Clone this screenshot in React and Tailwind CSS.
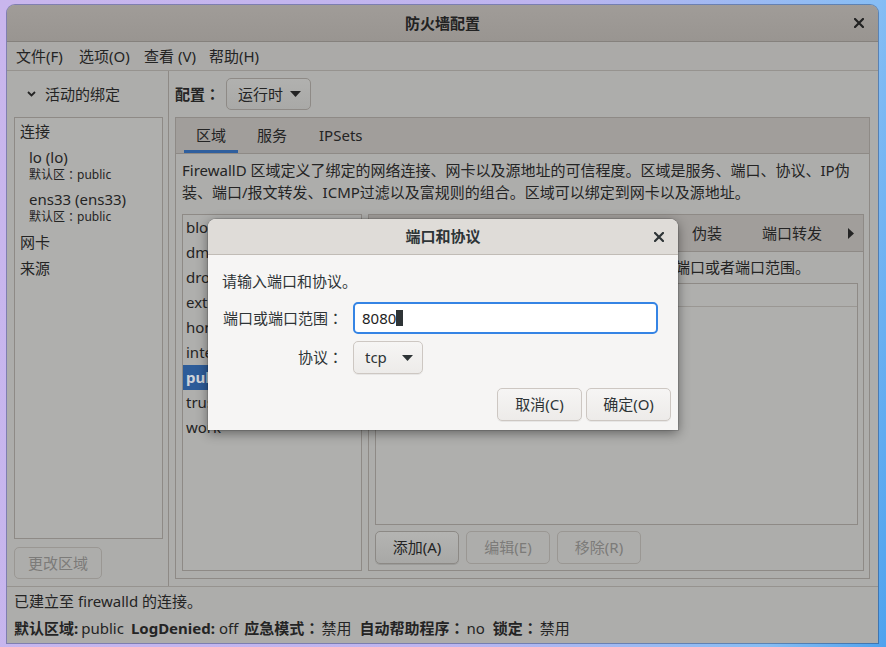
import React from "react";

function Caret({ className = "" }) {
  return (
    <svg width="11" height="6" viewBox="0 0 11 6" className={className}>
      <path d="M0 0H11L5.5 6Z" fill="currentColor" />
    </svg>
  );
}

function CloseX({ className = "" }) {
  return (
    <svg width="10" height="10" viewBox="0 0 10 10" className={className}>
      <path d="M1 1L9 9M9 1L1 9" stroke="currentColor" strokeWidth="2.2" strokeLinecap="square" />
    </svg>
  );
}

function Chevron() {
  return (
    <svg width="9" height="6" viewBox="0 0 9 6">
      <path d="M1 1L4.5 4.5L8 1" stroke="currentColor" strokeWidth="1.8" fill="none" />
    </svg>
  );
}

function C() {
  return <span className="font-['Noto_Sans_CJK_JP',sans-serif]">：</span>;
}

const zones = ["block", "dmz", "drop", "external", "home", "internal", "public", "trusted", "work"];

export default function App() {
  return (
    <div className="relative w-[886px] h-[647px] overflow-hidden bg-[linear-gradient(100deg,#c9b6ed_0%,#bdb4ef_55%,#86bdf4_88%,#4ea2ee_100%)] pt-[5px] pl-[7px] font-['Noto_Sans','Noto_Sans_CJK_SC',sans-serif] text-[15px] text-[#242424]">
      {/* Main window */}
      <div className="w-[871px] h-[638px] flex flex-col rounded-t-[8px] overflow-hidden bg-[#adadab] shadow-[0_0_0_1px_rgba(40,60,100,0.45)]">
        {/* Title bar */}
        <div className="h-[37px] shrink-0 grid grid-cols-[1fr_auto_1fr] items-center bg-[linear-gradient(to_bottom,#a09c98,#999591)] border-b border-[#85817d]">
          <div />
          <div className="font-bold text-[#222]">防火墙配置</div>
          <div className="flex justify-end pr-[14px] text-[#222]">
            <CloseX />
          </div>
        </div>
        {/* Menu bar */}
        <div className="h-[29px] shrink-0 flex items-center pl-[9px] bg-[#abaaa8] border-b border-[#96938f]">
          <span className="w-[63px]">文件(F)</span>
          <span className="w-[65px]">选项(O)</span>
          <span className="w-[65px]">查看 (V)</span>
          <span>帮助(H)</span>
        </div>
        {/* Main area */}
        <div className="h-[515px] shrink-0 flex">
          {/* Left pane */}
          <div className="w-[162px] shrink-0 border-r border-[#8e8a86] flex flex-col pl-[7px]">
            <div className="h-[46px] flex items-center pl-[13px] gap-[9px]">
              <Chevron />
              <span>活动的绑定</span>
            </div>
            <div className="w-[149px] h-[422px] border border-[#8e8a86] bg-[#afafad] flex flex-col">
              <div className="h-[26px] flex items-center pl-[5px]">连接</div>
              <div className="h-[3px]" />
              <div className="h-[20px] flex items-center pl-[14px]">lo (lo)</div>
              <div className="h-[16px] flex items-center pl-[14px] text-[12px]">
                默认区<C />public
              </div>
              <div className="h-[6px]" />
              <div className="h-[20px] flex items-center pl-[14px]">ens33 (ens33)</div>
              <div className="h-[15px] flex items-center pl-[14px] text-[12px]">
                默认区<C />public
              </div>
              <div className="h-[5px]" />
              <div className="h-[26px] flex items-center pl-[5px]">网卡</div>
              <div className="h-[26px] flex items-center pl-[5px]">来源</div>
            </div>
            <div className="mt-[8px] w-[88px] h-[32px] rounded-[5px] border border-[#9a9793] flex items-center justify-center text-[#7c7b79]">
              更改区域
            </div>
          </div>
          {/* Right pane */}
          <div className="flex-1 flex flex-col pl-[6px] pr-[8px]">
            <div className="h-[46px] flex items-center">
              <span className="w-[51px] font-bold">
                配置<C />
              </span>
              <div className="w-[85px] h-[32px] rounded-[5px] border border-[#8e8a86] bg-[linear-gradient(to_bottom,#b1b1af,#a9a9a7)] flex items-center pl-[11px] gap-[7px]">
                <span>运行时</span>
                <Caret className="text-[#242424]" />
              </div>
            </div>
            {/* Notebook */}
            <div className="h-[462px] border border-[#8e8a86] flex flex-col">
              <div className="h-[36px] shrink-0 flex items-stretch pl-[8px] gap-[6px] bg-[#a19e9b] border-b border-[#8e8a86]">
                <div className="relative px-[12px] flex items-center">
                  区域
                  <div className="absolute left-0 right-0 bottom-0 h-[3px] bg-[#2f5f9e]" />
                </div>
                <div className="px-[13px] flex items-center">服务</div>
                <div className="px-[13px] flex items-center">IPSets</div>
              </div>
              <div className="pt-[5px] pl-[6px] leading-[22px] whitespace-nowrap">
                FirewallD 区域定义了绑定的网络连接、网卡以及源地址的可信程度。区域是服务、端口、协议、IP伪
                <br />
                装、端口/报文转发、ICMP过滤以及富规则的组合。区域可以绑定到网卡以及源地址。
              </div>
              <div className="mt-[11px] h-[357px] flex pl-[6px] pr-[5px] gap-[6px]">
                {/* Zone list */}
                <div className="w-[180px] shrink-0 border border-[#8e8a86] bg-[#afafad] flex flex-col">
                  {zones.map((z) => (
                    <div
                      key={z}
                      className={
                        z === "public"
                          ? "h-[25px] flex items-center pl-[3px] bg-[#2d5c99] text-[#cfd3d9] font-bold"
                          : "h-[25px] flex items-center pl-[3px]"
                      }
                    >
                      {z}
                    </div>
                  ))}
                </div>
                {/* Zone pane */}
                <div className="flex-1 border border-[#8e8a86] flex flex-col">
                  <div className="h-[37px] shrink-0 flex items-stretch bg-[#a19e9b] border-b border-[#8e8a86]">
                    <div className="flex-1 flex items-stretch justify-end pr-[2px]">
                      <div className="px-[20px] flex items-center">伪装</div>
                      <div className="px-[20px] flex items-center">端口转发</div>
                    </div>
                    <div className="w-[19px] flex items-center pl-[4px]">
                      <svg width="6" height="11" viewBox="0 0 6 11">
                        <path d="M0 0L6 5.5L0 11Z" fill="#242424" />
                      </svg>
                    </div>
                  </div>
                  <div className="h-[31px] flex items-center pl-[6px] whitespace-nowrap">
                    添加所有可以连接主机或网络都需访问的额外端口或者端口范围。
                  </div>
                  <div className="ml-[6px] mr-[5px] h-[242px] border border-[#8e8a86] bg-[#afafad] flex flex-col">
                    <div className="h-[23px] border-b border-[#9a9793]" />
                  </div>
                  <div className="mt-[6px] flex gap-[7px] pl-[6px]">
                    <div className="w-[84px] h-[33px] rounded-[5px] border border-[#8c8985] bg-[linear-gradient(to_bottom,#b4b4b2,#a8a8a6)] shadow-[0_1px_0_rgba(0,0,0,0.1)] flex items-center justify-center">
                      添加(A)
                    </div>
                    <div className="w-[84px] h-[33px] rounded-[5px] border border-[#9a9793] flex items-center justify-center text-[#7c7b79]">
                      编辑(E)
                    </div>
                    <div className="w-[84px] h-[33px] rounded-[5px] border border-[#9a9793] flex items-center justify-center text-[#7c7b79]">
                      移除(R)
                    </div>
                  </div>
                </div>
              </div>
            </div>
          </div>
        </div>
        {/* Status bar */}
        <div className="flex-1 border-t border-[#96938f] pl-[7px] pt-[3px]">
          <div className="h-[22px] flex items-center">已建立至 firewalld 的连接。</div>
          <div className="mt-[5px] h-[22px] flex items-center whitespace-nowrap">
            <span className="font-bold">默认区域:</span>
            <span className="ml-[3px]">public</span>
            <span className="ml-[7px] font-bold">LogDenied:</span>
            <span className="ml-[4px]">off</span>
            <span className="ml-[6px] font-bold">
              应急模式<C />
            </span>
            <span className="ml-[2px]">禁用</span>
            <span className="ml-[8px] font-bold">
              自动帮助程序<C />
            </span>
            <span className="ml-[2px]">no</span>
            <span className="ml-[8px] font-bold">
              锁定<C />
            </span>
            <span className="ml-[2px]">禁用</span>
          </div>
        </div>
      </div>

      {/* Modal dialog */}
      <div className="absolute left-[208px] top-[219px] w-[470px] h-[211px] rounded-t-[8px] overflow-hidden flex flex-col bg-[#f6f5f4] text-[#2e3436] shadow-[0_3px_12px_rgba(0,0,0,0.45),0_0_0_1px_rgba(0,0,0,0.12)]">
        <div className="h-[36px] shrink-0 grid grid-cols-[1fr_auto_1fr] items-center bg-[#dfdcd8] border-b border-[#c1bcb6]">
          <div />
          <div className="font-bold">端口和协议</div>
          <div className="flex justify-end pr-[14px]">
            <CloseX />
          </div>
        </div>
        <div className="flex-1 flex flex-col pt-[16px] pl-[14px] pr-[7px]">
          <div className="h-[20px] flex items-center">请输入端口和协议。</div>
          <div className="mt-[11px] grid grid-cols-[121px_305px] gap-x-[10px] gap-y-[7px] items-center">
            <div className="text-right">
              端口或端口范围<C />
            </div>
            <div className="h-[32px] rounded-[5px] border-2 border-[#3584e4] bg-white flex items-center pl-[7px] text-[#1e1e1e]">
              <span>8080</span>
              <span className="inline-block w-[7px] h-[16px] bg-[#2e3436]" />
            </div>
            <div className="text-right">
              协议<C />
            </div>
            <div className="w-[70px] h-[33px] rounded-[5px] border border-[#cdc7c2] bg-[linear-gradient(to_bottom,#f6f5f4,#edebe9)] shadow-[0_1px_0_rgba(0,0,0,0.06)] flex items-center pl-[11px] gap-[15px]">
              <span>tcp</span>
              <Caret className="text-[#2e3436]" />
            </div>
          </div>
          <div className="mt-[14px] flex justify-end gap-[4px]">
            <div className="w-[85px] h-[33px] rounded-[5px] border border-[#cdc7c2] bg-[linear-gradient(to_bottom,#f6f5f4,#edebe9)] shadow-[0_1px_0_rgba(0,0,0,0.06)] flex items-center justify-center">
              取消(C)
            </div>
            <div className="w-[85px] h-[33px] rounded-[5px] border border-[#cdc7c2] bg-[linear-gradient(to_bottom,#f6f5f4,#edebe9)] shadow-[0_1px_0_rgba(0,0,0,0.06)] flex items-center justify-center">
              确定(O)
            </div>
          </div>
        </div>
      </div>
    </div>
  );
}
